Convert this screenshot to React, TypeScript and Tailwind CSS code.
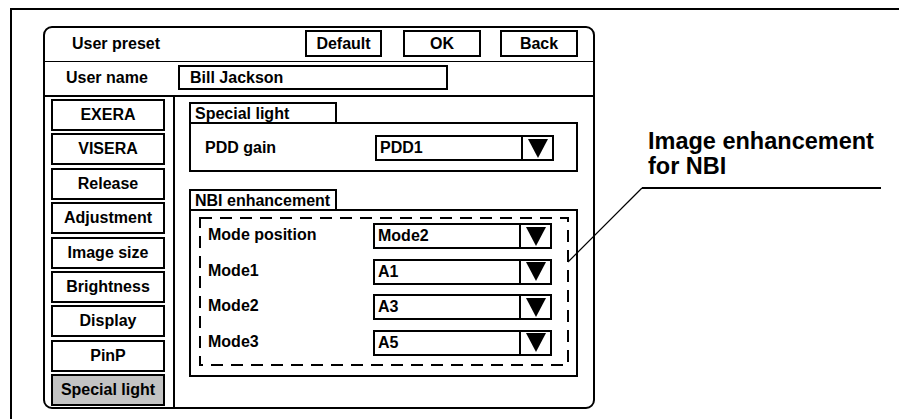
import React from "react";

function Arrow() {
  return (
    <div className="w-[31px] h-full border-l-2 border-black flex items-center justify-center">
      <svg width="20" height="19" viewBox="0 0 20 19">
        <polygon points="0,0 20,0 10,19" fill="#000" />
      </svg>
    </div>
  );
}

function Dropdown({ value }: { value: string }) {
  return (
    <div className="w-[179px] h-[26px] border-2 border-black flex items-stretch">
      <div className="flex-1 pl-[3px] flex items-center text-[16px] leading-[18px]">{value}</div>
      <Arrow />
    </div>
  );
}

function Tab({ label }: { label: string }) {
  return (
    <div className="w-[148px] h-[20px] border-t-2 border-x-2 border-black pl-[4px] pt-[1px] text-[16px] leading-[18px]">
      {label}
    </div>
  );
}

const menu = [
  "EXERA",
  "VISERA",
  "Release",
  "Adjustment",
  "Image size",
  "Brightness",
  "Display",
  "PinP",
  "Special light",
];

const modes: [string, string][] = [
  ["Mode position", "Mode2"],
  ["Mode1", "A1"],
  ["Mode2", "A3"],
  ["Mode3", "A5"],
];

export default function App() {
  return (
    <div className="w-[899px] h-[419px] bg-white overflow-hidden relative text-black font-bold font-['Liberation_Sans',Arial,sans-serif]">
      <div className="mt-[8px] ml-[10px] border-t-2 border-l-2 border-black h-[420px] pt-[16px] pl-[31px] flex items-start">
        {/* Panel */}
        <div className="w-[552px] h-[383px] shrink-0 border-2 border-black rounded-[9px] flex flex-col">
          {/* Header */}
          <div className="h-[34px] border-b border-black flex items-start pl-[27px] pr-[15px] pt-[2px]">
            <div className="mt-[5px] text-[16px] leading-[18px]">User preset</div>
            <div className="ml-auto flex">
              <div className="w-[77px] h-[27px] border-2 border-black flex items-center justify-center text-[16px] leading-[18px]">
                Default
              </div>
              <div className="ml-[21px] w-[78px] h-[27px] border-2 border-black flex items-center justify-center text-[16px] leading-[18px]">
                OK
              </div>
              <div className="ml-[19px] w-[78px] h-[27px] border-2 border-black flex items-center justify-center text-[16px] leading-[18px]">
                Back
              </div>
            </div>
          </div>
          {/* User name */}
          <div className="h-[35px] border-b-2 border-black flex items-start pl-[21px]">
            <div className="w-[112px] mt-[7px] text-[16px] leading-[18px]">User name</div>
            <div className="mt-[3px] w-[270px] h-[25px] border-2 border-black pl-[10px] flex items-center text-[16px] leading-[18px]">
              Bill Jackson
            </div>
          </div>
          {/* Body */}
          <div className="flex-1 flex">
            <div className="w-[130px] border-r-2 border-black pl-[6px] pt-[2px] flex flex-col gap-[2.4px]">
              {menu.map((m) => (
                <div
                  key={m}
                  className={
                    m === "Special light"
                      ? "w-[114px] h-[32px] border-2 border-black bg-[#c3c3c3] flex items-center justify-center text-[16px] leading-[18px]"
                      : "w-[114px] h-[32px] border-2 border-black bg-white flex items-center justify-center text-[16px] leading-[18px]"
                  }
                >
                  {m}
                </div>
              ))}
            </div>
            <div className="flex-1 pl-[14px] pr-[15px] pt-[5px] flex flex-col">
              <Tab label="Special light" />
              <div className="h-[50px] border-2 border-black flex items-start pt-[11px] pl-[14px] pr-[22px]">
                <div className="mt-[4px] text-[16px] leading-[18px]">PDD gain</div>
                <div className="ml-auto">
                  <Dropdown value="PDD1" />
                </div>
              </div>
              <div className="mt-[17px]">
                <Tab label="NBI enhancement" />
              </div>
              <div className="h-[168px] border-2 border-black pl-[8px] pr-[7px] pt-[6px]">
                <div className="relative h-[149px] pt-[6px] pl-[9px] pr-[17px] flex flex-col gap-[9.67px]">
                  <svg className="absolute inset-0 pointer-events-none" width="370" height="149" viewBox="0 0 370 149">
                    <rect x="1" y="1" width="368" height="147" fill="none" stroke="#000" strokeWidth="2" strokeDasharray="12 8" />
                  </svg>
                  {modes.map(([label, val]) => (
                    <div key={label} className="flex items-center h-[26px]">
                      <div className="text-[16px] leading-[18px] -mt-[2px]">{label}</div>
                      <div className="ml-auto">
                        <Dropdown value={val} />
                      </div>
                    </div>
                  ))}
                </div>
              </div>
            </div>
          </div>
        </div>
        {/* Callout text */}
        <div className="ml-[53px] mt-[103px] text-[23.5px] leading-[25px] whitespace-nowrap">
          <div>Image enhancement</div>
          <div>for NBI</div>
        </div>
      </div>
      <svg className="absolute inset-0 pointer-events-none" width="899" height="419" viewBox="0 0 899 419">
        <line x1="568" y1="262" x2="642" y2="188" stroke="#000" strokeWidth="1.2" />
        <line x1="642" y1="188" x2="881" y2="188" stroke="#000" strokeWidth="2" />
      </svg>
    </div>
  );
}
